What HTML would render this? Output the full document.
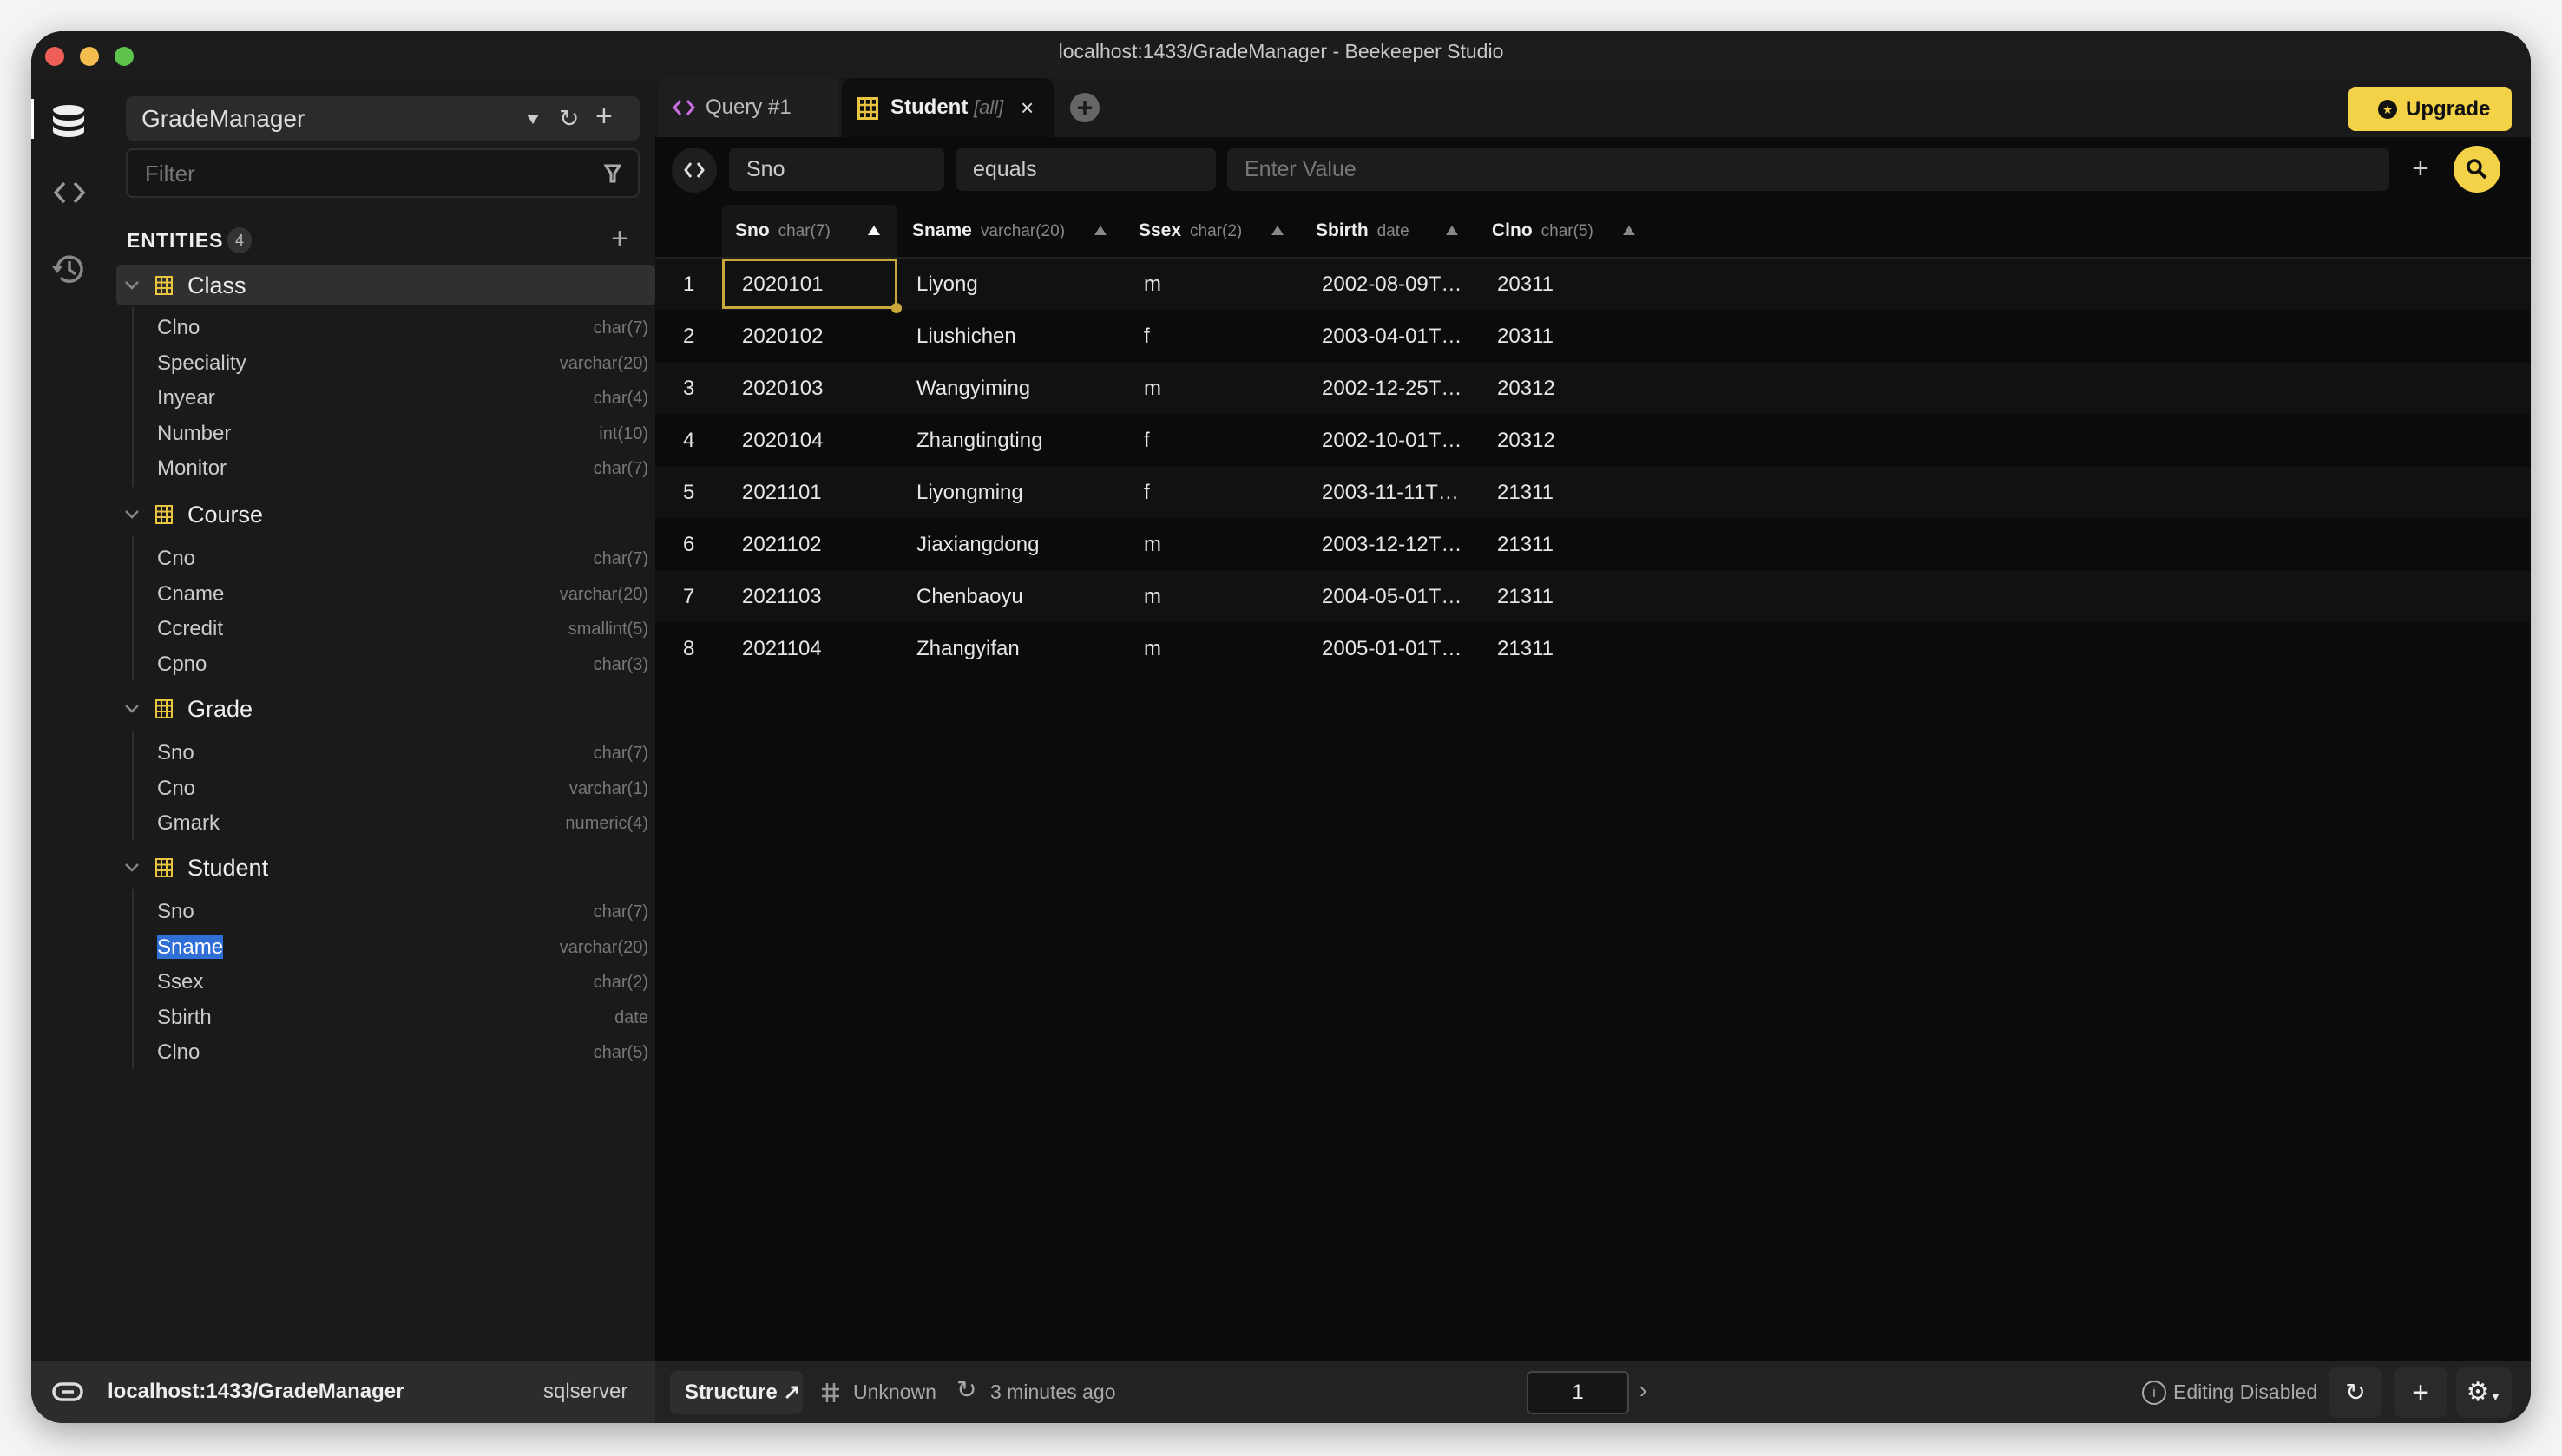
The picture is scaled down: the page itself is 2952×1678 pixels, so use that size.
<!DOCTYPE html>
<html><head><meta charset="utf-8"><style>
*{box-sizing:border-box;margin:0;padding:0}
body{width:2952px;height:1678px;background:#f4f4f4;font-family:"Liberation Sans",sans-serif;position:relative;overflow:hidden}
.win{position:absolute;left:36px;top:36px;width:2880px;height:1604px;border-radius:36px;background:#0b0b0b;overflow:hidden;box-shadow:0 10px 40px rgba(0,0,0,.35)}
.a{position:absolute;white-space:nowrap}
.t{color:#ddd;font-size:24px;line-height:40px}
.ty{color:#777;font-size:20px;line-height:40px;text-align:right}
.hd{font-size:21px;line-height:40px;color:#eee;font-weight:bold}
.hd span{font-weight:normal;color:#888;font-size:19px;margin-left:10px}
.arr{width:0;height:0;border-left:7px solid transparent;border-right:7px solid transparent;border-bottom:11px solid #888}
.cell{font-size:24px;line-height:40px;color:#e6e6e6}
</style></head><body>
<div class="win">
 <div class="a" style="left:0;top:0;width:2880px;height:54px;background:#1c1c1c"></div>
 <div class="a" style="left:16px;top:18px;width:22px;height:22px;border-radius:50%;background:#ee5f57"></div>
 <div class="a" style="left:56px;top:18px;width:22px;height:22px;border-radius:50%;background:#f4bd4f"></div>
 <div class="a" style="left:96px;top:18px;width:22px;height:22px;border-radius:50%;background:#5ec44b"></div>
 <div class="a" style="left:0;width:2880px;top:6px;text-align:center;color:#c8c8c8;font-size:23px;line-height:34px">localhost:1433/GradeManager - Beekeeper Studio</div>
 <div class="a" style="left:0;top:54px;width:719px;height:1478px;background:#1a1a1a"></div>
 <div class="a" style="left:0;top:78px;width:3px;height:46px;background:#fff"></div>
 <svg class="a" style="left:24px;top:84px" width="38" height="40" viewBox="0 0 38 40"><ellipse cx="19" cy="7" rx="18" ry="6" fill="#eee"/><path d="M1 12c0 4 8 7 18 7s18-3 18-7v7c0 4-8 7-18 7S1 23 1 19z" fill="#eee"/><path d="M1 24c0 4 8 7 18 7s18-3 18-7v7c0 4-8 7-18 7S1 35 1 31z" fill="#eee"/></svg>
 <svg class="a" style="left:24px;top:172px" width="40" height="28" viewBox="0 0 40 28"><path d="M14 3L4 14l10 11M26 3l10 11-10 11" stroke="#999" stroke-width="3.5" fill="none"/></svg>
 <svg class="a" style="left:22px;top:253px" width="42" height="42" viewBox="0 0 42 42"><path d="M8 21a14 14 0 1 1 4 10" stroke="#888" stroke-width="3.5" fill="none"/><path d="M2 18l6 8 6-8z" fill="#888"/><path d="M22 12v10l7 5" stroke="#888" stroke-width="3.5" fill="none"/></svg>
 <div class="a" style="left:109px;top:75px;width:592px;height:51px;background:#2b2b2b;border-radius:8px"></div>
 <div class="a" style="left:127px;top:81px;color:#ddd;font-size:28px;line-height:40px">GradeManager</div>
 <div class="a arr" style="left:571px;top:96px;transform:rotate(180deg);border-bottom-color:#ccc"></div>
 <div class="a" style="left:608px;top:81px;color:#ccc;font-size:28px;line-height:40px">↻</div>
 <div class="a" style="left:650px;top:78px;color:#ccc;font-size:34px;line-height:40px">+</div>
 <div class="a" style="left:109px;top:135px;width:592px;height:57px;border:2px solid #2e2e2e;border-radius:8px;background:#161616"></div>
 <div class="a" style="left:131px;top:144px;color:#777;font-size:26px;line-height:40px">Filter</div>
 <svg class="a" style="left:660px;top:152px" width="20" height="24" viewBox="0 0 20 24"><path d="M2 3h16l-6 9v9h-4v-9z" stroke="#aaa" stroke-width="3" fill="none"/></svg>
 <div class="a" style="left:110px;top:221px;color:#eee;font-size:23px;font-weight:bold;letter-spacing:1px;line-height:40px">ENTITIES</div>
 <div class="a" style="left:226px;top:226px;width:28px;height:30px;border-radius:14px;background:#333;color:#bbb;font-size:18px;line-height:30px;text-align:center">4</div>
 <div class="a" style="left:668px;top:219px;color:#aaa;font-size:34px;line-height:40px">+</div>
 <div class="a" style="left:98px;top:269px;width:621px;height:47px;background:#303030;border-radius:6px"></div>
 <div id="tree"></div>
 <div class="a" style="left:719px;top:54px;width:2161px;height:104px;background:#1a1a1a"></div>
 <div class="a" style="left:723px;top:54px;width:207px;height:68px;background:#1f1f1f;border-radius:10px 10px 0 0"></div>
 <svg class="a" style="left:739px;top:78px" width="26" height="20" viewBox="0 0 26 20"><path d="M9 2L2 10l7 8M17 2l7 8-7 8" stroke="#c86ee0" stroke-width="3" fill="none"/></svg>
 <div class="a" style="left:777px;top:68px;color:#bbb;font-size:24px;line-height:40px">Query #1</div>
 <div class="a" style="left:934px;top:54px;width:244px;height:104px;background:#0f0f0f;border-radius:10px 10px 0 0"></div>
 <svg class="a" style="left:952px;top:76px" width="24" height="26" viewBox="0 0 24 26"><rect x="1.5" y="1.5" width="21" height="23" fill="none" stroke="#e8c440" stroke-width="3"/><path d="M1 9h22M1 17h22M8.5 1v24M15.5 1v24" stroke="#e8c440" stroke-width="2.5"/></svg>
 <div class="a" style="left:990px;top:68px;color:#eee;font-size:24px;font-weight:bold;line-height:40px">Student <i style="font-weight:normal;color:#777;font-size:22px">[all]</i></div>
 <div class="a" style="left:1140px;top:68px;color:#ddd;font-size:26px;line-height:40px">×</div>
 <div class="a" style="left:1197px;top:71px;width:34px;height:34px;border-radius:50%;background:#666;color:#1a1a1a;font-size:32px;line-height:34px;text-align:center;font-weight:bold">+</div>
 <div class="a" style="left:2670px;top:64px;width:188px;height:51px;background:#f4d247;border-radius:8px;color:#111;font-size:24px;font-weight:bold;line-height:51px;padding-left:66px">Upgrade</div>
 <div class="a" style="left:2704px;top:79px;width:22px;height:22px;border-radius:50%;background:#111;color:#f4d247;font-size:14px;line-height:22px;text-align:center">★</div>
 <div class="a" style="left:719px;top:122px;width:2161px;height:1410px;background:#0b0b0b"></div>
 <div class="a" style="left:738px;top:134px;width:52px;height:52px;border-radius:50%;background:#1e1e1e"></div>
 <svg class="a" style="left:752px;top:150px" width="24" height="20" viewBox="0 0 24 20"><path d="M8 2L2 10l6 8M16 2l6 8-6 8" stroke="#ddd" stroke-width="3" fill="none"/></svg>
 <div class="a" style="left:804px;top:134px;width:248px;height:50px;background:#1c1c1c;border-radius:8px;color:#ccc;font-size:25px;line-height:50px;padding-left:20px">Sno</div>
 <div class="a" style="left:1065px;top:134px;width:300px;height:50px;background:#1c1c1c;border-radius:8px;color:#ccc;font-size:25px;line-height:50px;padding-left:20px">equals</div>
 <div class="a" style="left:1378px;top:134px;width:1339px;height:50px;background:#1c1c1c;border-radius:8px;color:#777;font-size:25px;line-height:50px;padding-left:20px">Enter Value</div>
 <div class="a" style="left:2743px;top:138px;color:#ccc;font-size:34px;line-height:40px">+</div>
 <div class="a" style="left:2791px;top:132px;width:54px;height:54px;border-radius:50%;background:#f4d247"></div>
 <svg class="a" style="left:2805px;top:146px" width="26" height="26" viewBox="0 0 26 26"><circle cx="10" cy="10" r="7" stroke="#111" stroke-width="3.5" fill="none"/><path d="M15 15l8 8" stroke="#111" stroke-width="4"/></svg>
 <div class="a" style="left:796px;top:200px;width:202px;height:62px;background:#161616;border-radius:6px 6px 0 0"></div>
 <div class="a" style="left:719px;top:260px;width:2161px;height:2px;background:#222"></div>
 <div id="grid"></div>
 <div class="a" style="left:796px;top:262px;width:202px;height:58px;border:3px solid #c9a83a"></div>
 <div class="a" style="left:991px;top:313px;width:12px;height:12px;border-radius:50%;background:#c9a83a"></div>
 <div class="a" style="left:0;top:1532px;width:719px;height:72px;background:#2c2c2c"></div>
 <div class="a" style="left:719px;top:1532px;width:2161px;height:72px;background:#222"></div>
 <svg class="a" style="left:24px;top:1556px" width="36" height="24" viewBox="0 0 36 24"><rect x="2" y="3" width="32" height="18" rx="9" stroke="#ddd" stroke-width="3.5" fill="none"/><path d="M11 12h14" stroke="#ddd" stroke-width="3.5"/></svg>
 <div class="a" style="left:88px;top:1548px;color:#eee;font-size:24px;font-weight:bold;line-height:40px">localhost:1433/GradeManager</div>
 <div class="a" style="left:590px;top:1548px;color:#ccc;font-size:24px;line-height:40px">sqlserver</div>
 <div class="a" style="left:736px;top:1544px;width:153px;height:50px;background:#2e2e2e;border-radius:8px;color:#eee;font-size:24px;font-weight:bold;line-height:50px;padding-left:17px">Structure ↗</div>
 <svg class="a" style="left:909px;top:1556px" width="24" height="26" viewBox="0 0 24 26"><path d="M8 2v22M16 2v22M2 9h20M2 17h20" stroke="#999" stroke-width="2.5"/></svg>
 <div class="a" style="left:947px;top:1548px;color:#aaa;font-size:23px;line-height:40px">Unknown</div>
 <div class="a" style="left:1066px;top:1546px;color:#aaa;font-size:28px;line-height:40px">↻</div>
 <div class="a" style="left:1105px;top:1548px;color:#aaa;font-size:23px;line-height:40px">3 minutes ago</div>
 <div class="a" style="left:1723px;top:1544px;width:118px;height:50px;border:2px solid #444;border-radius:6px;background:#161616;color:#eee;font-size:24px;line-height:46px;text-align:center">1</div>
 <div class="a" style="left:1853px;top:1546px;color:#aaa;font-size:26px;line-height:40px">›</div>
 <div class="a" style="left:2432px;top:1555px;width:28px;height:28px;border:2.5px solid #aaa;border-radius:50%;color:#aaa;font-size:17px;line-height:23px;text-align:center">i</div>
 <div class="a" style="left:2468px;top:1548px;color:#aaa;font-size:23px;line-height:40px">Editing Disabled</div>
 <div class="a" style="left:2647px;top:1540px;width:62px;height:58px;border-radius:10px;background:#2a2a2a;color:#eee;font-size:28px;line-height:58px;text-align:center">↻</div>
 <div class="a" style="left:2722px;top:1540px;width:62px;height:58px;border-radius:10px;background:#2a2a2a;color:#eee;font-size:34px;line-height:58px;text-align:center">+</div>
 <div class="a" style="left:2794px;top:1540px;width:64px;height:58px;border-radius:10px;background:#2a2a2a;color:#eee;font-size:30px;line-height:58px;text-align:center">⚙<span style="font-size:14px">▼</span></div>
</div>
<script>
var T=document.getElementById('tree'),h='';
var tree=[["Class",273,[["Clno","char(7)"],["Speciality","varchar(20)"],["Inyear","char(4)"],["Number","int(10)"],["Monitor","char(7)"]],342],
["Course",537,[["Cno","char(7)"],["Cname","varchar(20)"],["Ccredit","smallint(5)"],["Cpno","char(3)"]],608],
["Grade",761,[["Sno","char(7)"],["Cno","varchar(1)"],["Gmark","numeric(4)"]],832],
["Student",944,[["Sno","char(7)"],["Sname","varchar(20)"],["Ssex","char(2)"],["Sbirth","date"],["Clno","char(5)"]],1015]];
tree.forEach(function(g){
 var n=g[2].length;
 h+='<div class="a" style="left:116px;top:'+(g[1]+45)+'px;width:2px;height:'+(n*40.5+4)+'px;background:#2e2e2e"></div>';
 h+='<svg class="a" style="left:107px;top:'+(g[1]+14)+'px" width="18" height="12" viewBox="0 0 18 12"><path d="M2 2l7 7 7-7" stroke="#888" stroke-width="2.5" fill="none"/></svg>';
 h+='<svg class="a" style="left:143px;top:'+(g[1]+9)+'px" width="20" height="22" viewBox="0 0 20 22"><rect x="1" y="1" width="18" height="20" fill="none" stroke="#e8c440" stroke-width="2"/><path d="M1 7.5h18M1 14h18M7 1v20M13 1v20" stroke="#e8c440" stroke-width="2"/></svg>';
 h+='<div class="a" style="left:180px;top:'+g[1]+'px;color:#eee;font-size:27px;line-height:40px">'+g[0]+'</div>';
 g[2].forEach(function(c,i){var y=g[3]+i*40.5-20;
  var nm=c[0]=="Sname"&&g[0]=="Student"?'<span style="background:#2f6fd6;color:#fff">Sname</span>':c[0];
  h+='<div class="a t" style="left:145px;top:'+y+'px;color:#ccc">'+nm+'</div><div class="a ty" style="right:2169px;top:'+y+'px">'+c[1]+'</div>';});
});
T.outerHTML=h;
var G=document.getElementById('grid'),g='';
[["Sno","char(7)",811,964,"#fff"],["Sname","varchar(20)",1015,1225],["Ssex","char(2)",1276,1429],["Sbirth","date",1480,1630],["Clno","char(5)",1683,1834]].forEach(function(c){
 g+='<div class="a hd" style="left:'+c[2]+'px;top:210px">'+c[0]+'<span>'+c[1]+'</span></div><div class="a arr" style="left:'+c[3]+'px;top:224px;'+(c[4]?'border-bottom-color:#fff':'')+'"></div>';});
var rows=[["2020101","Liyong","m","2002-08-09T…","20311"],["2020102","Liushichen","f","2003-04-01T…","20311"],["2020103","Wangyiming","m","2002-12-25T…","20312"],["2020104","Zhangtingting","f","2002-10-01T…","20312"],["2021101","Liyongming","f","2003-11-11T…","21311"],["2021102","Jiaxiangdong","m","2003-12-12T…","21311"],["2021103","Chenbaoyu","m","2004-05-01T…","21311"],["2021104","Zhangyifan","m","2005-01-01T…","21311"]];
var xs=[819,1020,1282,1487,1689];
rows.forEach(function(r,i){var top=262+i*60;
 g+='<div class="a" style="left:719px;top:'+top+'px;width:2161px;height:60px;background:'+(i%2?'#0b0b0b':'#111')+'"></div>';
 g+='<div class="a cell" style="left:751px;top:'+(top+10)+'px">'+(i+1)+'</div>';
 r.forEach(function(v,j){g+='<div class="a cell" style="left:'+xs[j]+'px;top:'+(top+10)+'px">'+v+'</div>';});});
G.outerHTML=g;
</script>
</body></html>
